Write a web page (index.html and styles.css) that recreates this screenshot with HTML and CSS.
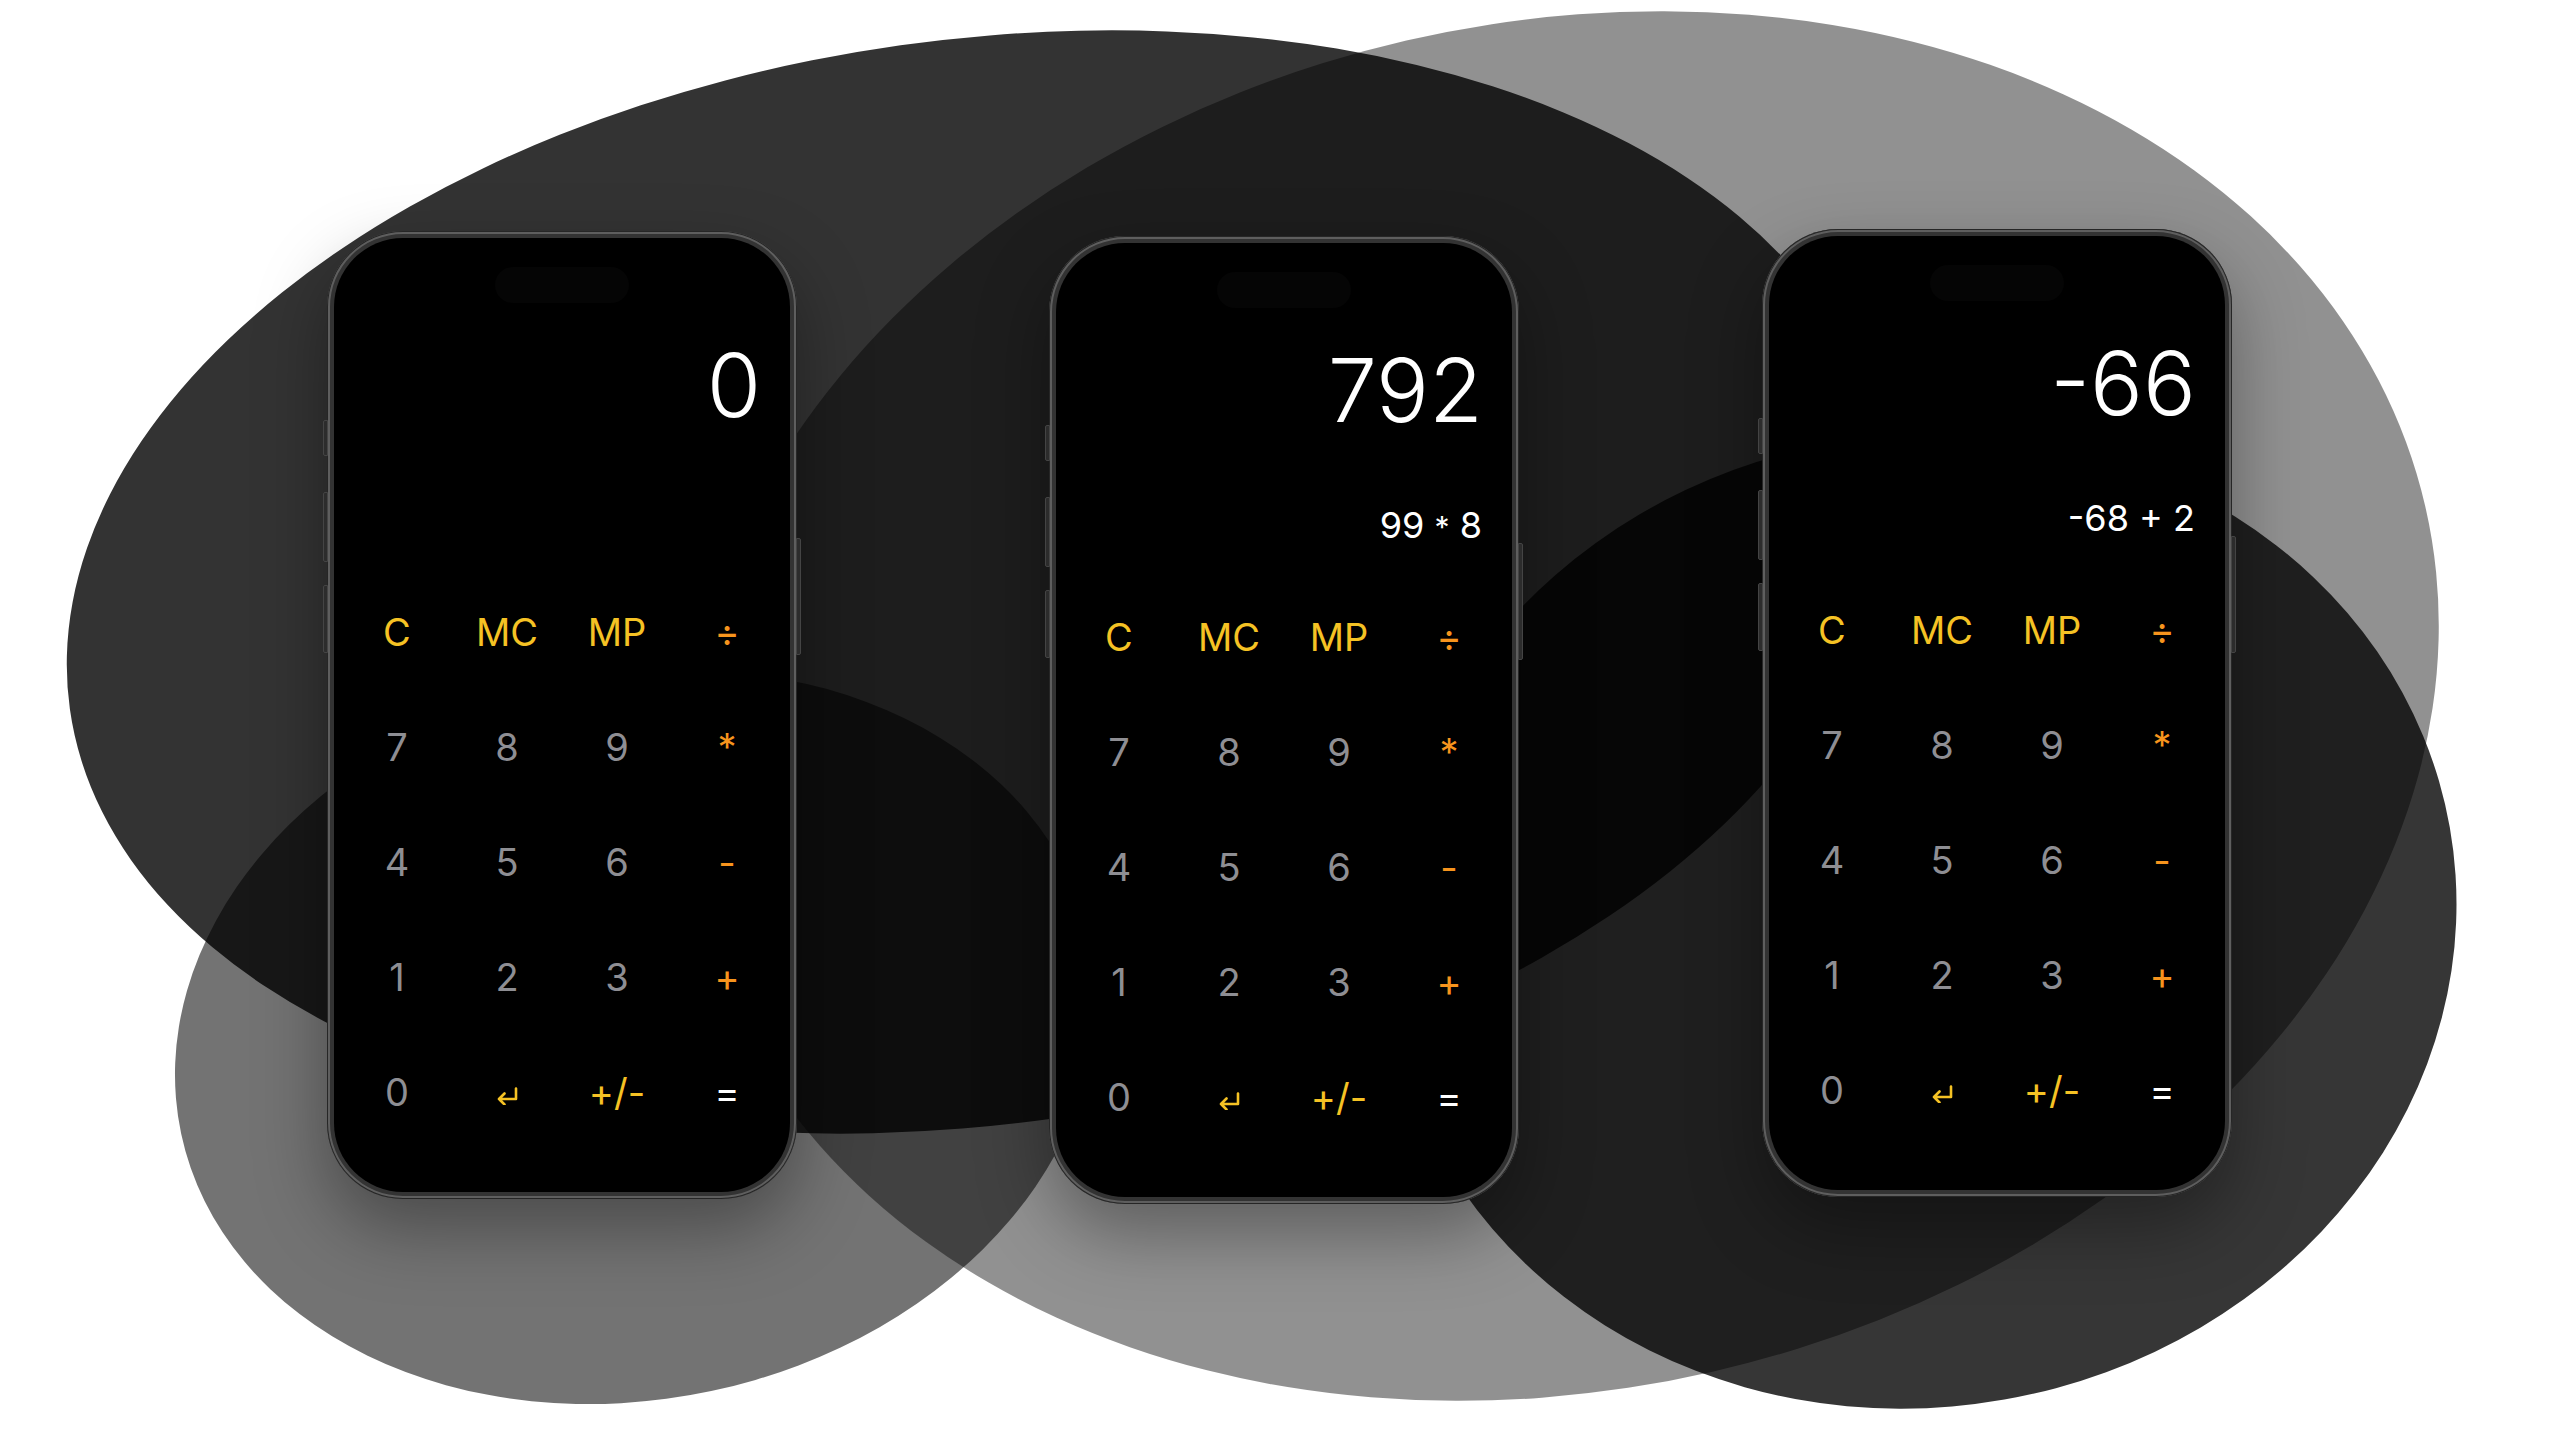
FILE: index.html
```html
<!DOCTYPE html>
<html lang="en">
<head>
    <meta charset="UTF-8">
    <meta name="viewport" content="width=device-width, initial-scale=1.0">
    <title>Calculator Screens</title>
    <link rel="stylesheet" href="styles.css">
</head>
<body>
    <div class="stage">
        <!-- soft overlapping blobs behind the devices -->
        <svg class="backdrop" viewBox="0 0 2556 1438" xmlns="http://www.w3.org/2000/svg">
            <ellipse cx="976" cy="582" rx="915" ry="542" transform="rotate(-8 976 582)" fill="#000" fill-opacity="0.8"/>
            <ellipse cx="1560" cy="706" rx="888" ry="683" transform="rotate(-13 1560 706)" fill="#000" fill-opacity="0.431"/>
            <ellipse cx="636" cy="1037" rx="465" ry="362" transform="rotate(-12 636 1037)" fill="#000" fill-opacity="0.549"/>
            <ellipse cx="1920" cy="921" rx="538" ry="486" transform="rotate(-10 1920 921)" fill="#000" fill-opacity="0.79"/>
        </svg>

        <div class="phones">
            <div class="phone phone-one">
                <span class="side-btn action"></span>
                <span class="side-btn vol-up"></span>
                <span class="side-btn vol-down"></span>
                <span class="side-btn power"></span>
                <div class="screen">
                    <div class="island"></div>
                    <div class="result">0</div>
                    <div class="expr"></div>
                    <div class="keypad">
                        <span class="key fn">C</span>
                        <span class="key fn">MC</span>
                        <span class="key fn">MP</span>
                        <span class="key op">÷</span>
                        <span class="key">7</span>
                        <span class="key">8</span>
                        <span class="key">9</span>
                        <span class="key op">*</span>
                        <span class="key">4</span>
                        <span class="key">5</span>
                        <span class="key">6</span>
                        <span class="key op">-</span>
                        <span class="key">1</span>
                        <span class="key">2</span>
                        <span class="key">3</span>
                        <span class="key op">+</span>
                        <span class="key">0</span>
                        <span class="key fn"><svg class="enter-icon" viewBox="0 0 24 18"><path d="M21 1.5V12H4M9.5 6.5L4 12l5.5 5.5"/></svg></span>
                        <span class="key fn">+/-</span>
                        <span class="key eq">=</span>
                    </div>
                </div>
            </div>

            <div class="phone phone-two">
                <span class="side-btn action"></span>
                <span class="side-btn vol-up"></span>
                <span class="side-btn vol-down"></span>
                <span class="side-btn power"></span>
                <div class="screen">
                    <div class="island"></div>
                    <div class="result">792</div>
                    <div class="expr">99 <span class="star">*</span> 8</div>
                    <div class="keypad">
                        <span class="key fn">C</span>
                        <span class="key fn">MC</span>
                        <span class="key fn">MP</span>
                        <span class="key op">÷</span>
                        <span class="key">7</span>
                        <span class="key">8</span>
                        <span class="key">9</span>
                        <span class="key op">*</span>
                        <span class="key">4</span>
                        <span class="key">5</span>
                        <span class="key">6</span>
                        <span class="key op">-</span>
                        <span class="key">1</span>
                        <span class="key">2</span>
                        <span class="key">3</span>
                        <span class="key op">+</span>
                        <span class="key">0</span>
                        <span class="key fn"><svg class="enter-icon" viewBox="0 0 24 18"><path d="M21 1.5V12H4M9.5 6.5L4 12l5.5 5.5"/></svg></span>
                        <span class="key fn">+/-</span>
                        <span class="key eq">=</span>
                    </div>
                </div>
            </div>

            <div class="phone phone-three">
                <span class="side-btn action"></span>
                <span class="side-btn vol-up"></span>
                <span class="side-btn vol-down"></span>
                <span class="side-btn power"></span>
                <div class="screen">
                    <div class="island"></div>
                    <div class="result">-66</div>
                    <div class="expr">-68 + 2</div>
                    <div class="keypad">
                        <span class="key fn">C</span>
                        <span class="key fn">MC</span>
                        <span class="key fn">MP</span>
                        <span class="key op">÷</span>
                        <span class="key">7</span>
                        <span class="key">8</span>
                        <span class="key">9</span>
                        <span class="key op">*</span>
                        <span class="key">4</span>
                        <span class="key">5</span>
                        <span class="key">6</span>
                        <span class="key op">-</span>
                        <span class="key">1</span>
                        <span class="key">2</span>
                        <span class="key">3</span>
                        <span class="key op">+</span>
                        <span class="key">0</span>
                        <span class="key fn"><svg class="enter-icon" viewBox="0 0 24 18"><path d="M21 1.5V12H4M9.5 6.5L4 12l5.5 5.5"/></svg></span>
                        <span class="key fn">+/-</span>
                        <span class="key eq">=</span>
                    </div>
                </div>
            </div>
        </div>
    </div>
</body>
</html>
```

FILE: styles.css
```css
:root {
    --frame-color: #333333;
    --frame-edge: #5e5e5e;
    --digit-color: #8e8e93;
    --fn-color: #f5c224;
    --op-color: #f7941d;
}

* {
    box-sizing: border-box;
    margin: 0;
    padding: 0;
}

body {
    background: #ffffff;
    font-family: Inter, 'Noto Sans', 'DejaVu Sans', sans-serif;
}

.stage {
    position: relative;
    width: 2556px;
    height: 1438px;
    overflow: hidden;
    background: #ffffff;
}

.backdrop {
    position: absolute;
    top: 0;
    left: 0;
    width: 2556px;
    height: 1438px;
}

.phones {
    position: relative;
    display: flex;
    align-items: flex-start;
    padding: 229px 0 0 327px;
}

.phone {
    position: relative;
    width: 470px;
    height: 968px;
    padding: 7px;
    border-radius: 76px;
    background: var(--frame-color);
    box-shadow:
        inset 0 0 0 1px #262626,
        inset 0 0 0 3px var(--frame-edge),
        0 30px 70px rgba(0, 0, 0, 0.35);
}

.phone-one {
    margin-top: 2px;
}

.phone-two {
    margin-left: 252px;
    margin-top: 7px;
}

.phone-three {
    margin-left: 243px;
}

.side-btn {
    position: absolute;
    width: 5px;
    background: #2c2c2c;
    border: 1px solid #444;
}

.side-btn.action {
    left: -4px;
    top: 189px;
    height: 36px;
    border-radius: 2px 0 0 2px;
}

.side-btn.vol-up {
    left: -4px;
    top: 261px;
    height: 70px;
    border-radius: 2px 0 0 2px;
}

.side-btn.vol-down {
    left: -4px;
    top: 354px;
    height: 68px;
    border-radius: 2px 0 0 2px;
}

.side-btn.power {
    right: -4px;
    top: 307px;
    height: 117px;
    border-radius: 0 2px 2px 0;
}

.screen {
    position: relative;
    height: 100%;
    padding-top: 103px;
    border-radius: 69px;
    background: #000;
    overflow: hidden;
}

.island {
    position: absolute;
    top: 29px;
    left: 50%;
    width: 134px;
    height: 36px;
    margin-left: -67px;
    border-radius: 18px;
    background: #050505;
}

.result {
    height: 88px;
    padding-right: 29px;
    text-align: right;
    color: #fff;
    font-size: 88px;
    font-weight: 300;
    line-height: 88px;
}

.expr {
    height: 36px;
    margin-top: 73px;
    padding-right: 30px;
    text-align: right;
    color: #fff;
    font-size: 36px;
    line-height: 36px;
}

.expr .star {
    font-size: 30px;
}

.keypad {
    display: grid;
    grid-template-columns: repeat(4, 110px);
    grid-auto-rows: 115px;
    justify-content: center;
    margin-top: 36px;
}

.key {
    display: flex;
    align-items: center;
    justify-content: center;
    color: var(--digit-color);
    font-size: 38px;
}

.key.fn {
    color: var(--fn-color);
}

.key.op {
    color: var(--op-color);
}

.key.eq {
    color: #fff;
}

.enter-icon {
    width: 24px;
    height: 18px;
    margin-top: 8px;
    fill: none;
    stroke: currentColor;
    stroke-width: 2.6;
    stroke-linecap: round;
    stroke-linejoin: round;
}
```
